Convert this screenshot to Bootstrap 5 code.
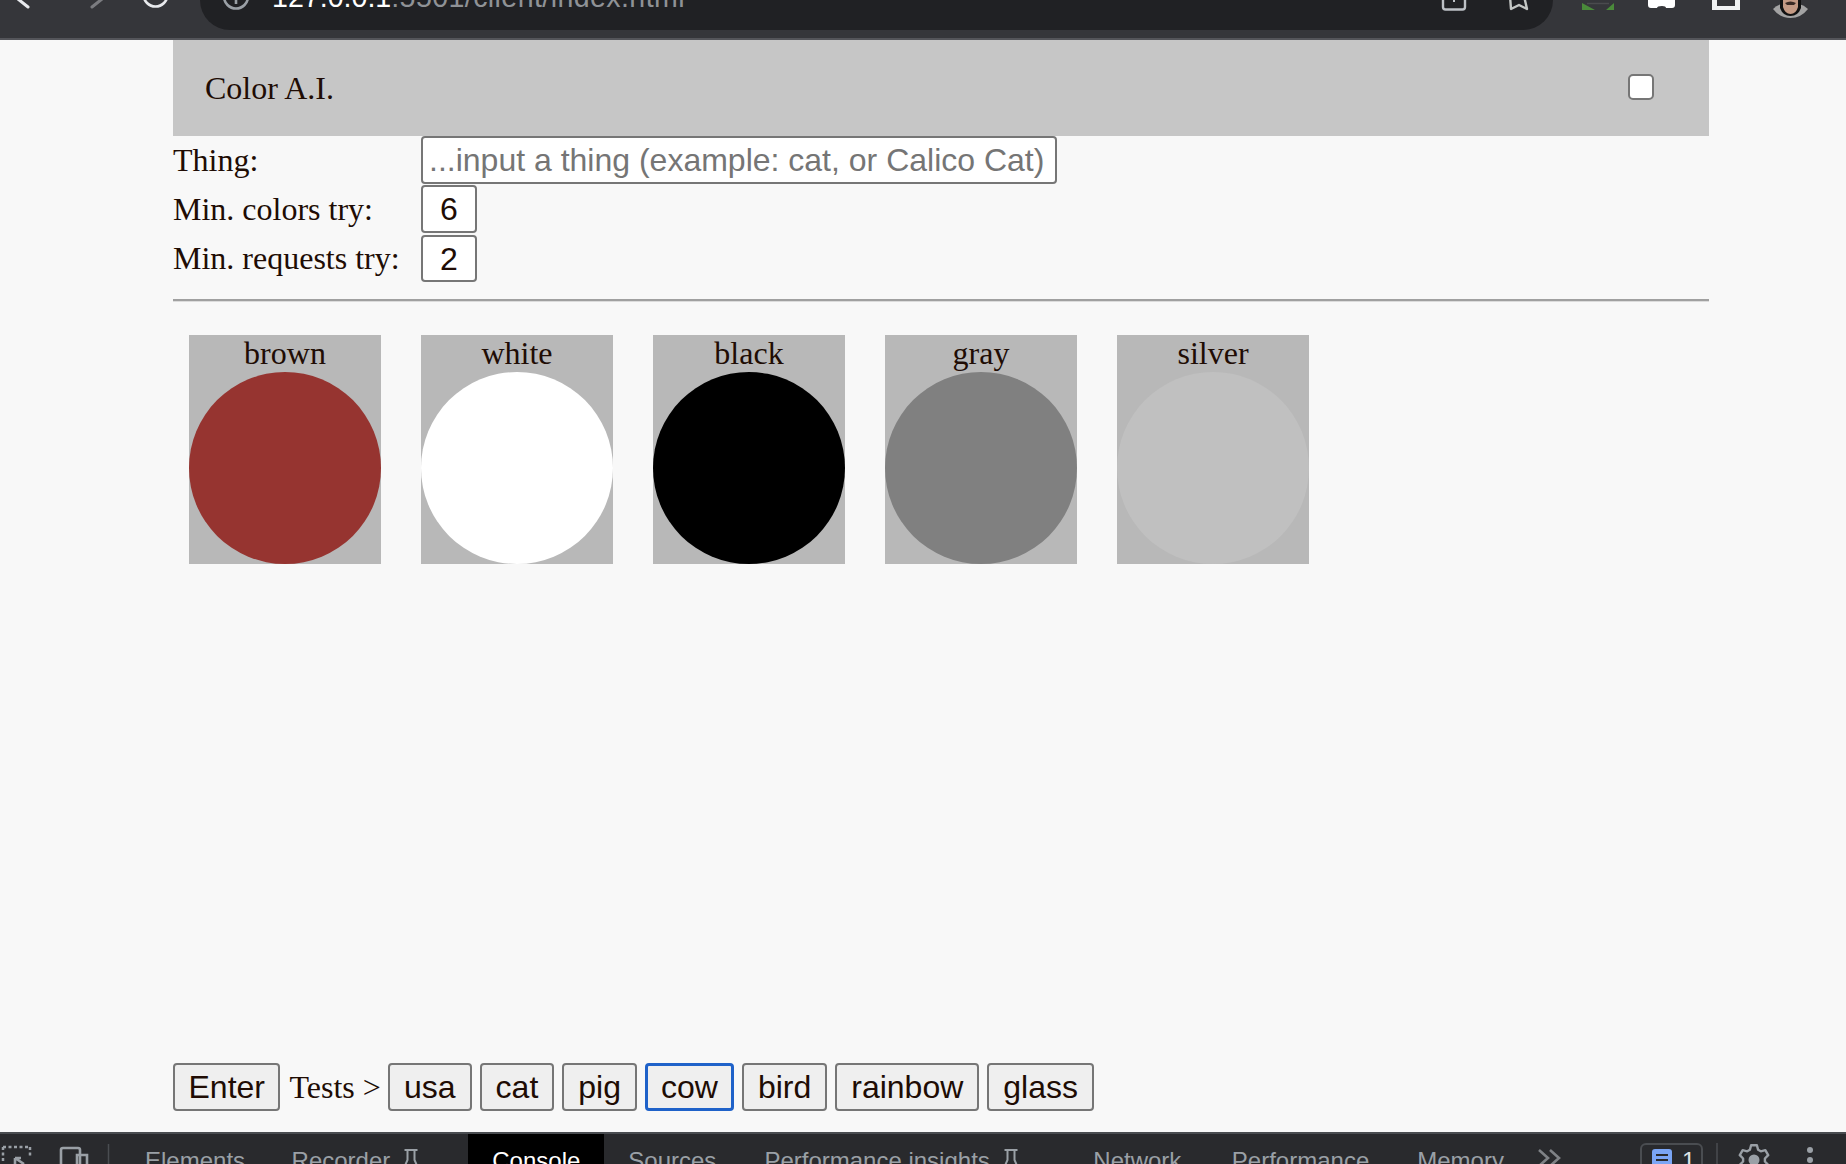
<!DOCTYPE html>
<html lang="en">
<head>
  <meta charset="UTF-8" />
  <title>Color A.I.</title>
  <link href="https://cdn.jsdelivr.net/npm/bootstrap@5.3.0/dist/css/bootstrap.min.css" rel="stylesheet" />
  <style>
    html, body { height: 100%; overflow: hidden; }
    body {
      background: #f8f8f8;
      color: #200c04;
      font-family: "Liberation Serif", serif;
      font-size: 32px;
      line-height: 37px;
    }
    svg { display: block; flex: none; }

    /* browser chrome, cut off at the top */
    .chrome-bar { height: 40px; flex: none; background: #35363a; border-bottom: 2px solid #54555a; }
    .omni {
      width: 1353px; height: 30px; flex: none;
      background: #202124; border-radius: 0 0 30px 30px;
      font: 28.6px/1 "Liberation Sans", sans-serif; color: #8f9296;
    }
    .omni-url { position: relative; flex: none; align-self: flex-end; margin: 0 0 18px 21px; white-space: nowrap; letter-spacing: .4px; }
    .omni-url b { font-weight: 400; color: #fff; letter-spacing: 0; }

    .app-wrap { padding: 0 137px 0 173px; }
    .app-head { height: 96px; background: #c6c6c6; padding: 0 55px 0 32px; }
    .app-check { width: 26px; height: 26px; border: 2px solid #767676; border-radius: 5px; background: #fff; appearance: none; display: block; margin-bottom: 2px; }

    .form-line { height: 49.4px; }
    .form-line label { width: 248px; flex: none; padding-top: 5.6px; }
    .txt-input {
      height: 47.6px; border: 2px solid #767676; border-radius: 4px; background: #fff;
      font: 32px "Liberation Sans", sans-serif; color: #200c04; padding: 1px 6px 0;
    }
    .txt-input::placeholder { color: #757575; opacity: 1; }
    .txt-thing { width: 636px; }
    .txt-num { width: 56px; text-align: center; }
    .rule { height: 3px; background: #a0a0a0; border-bottom: 1px solid #dcdcdc; margin: 15px 0 33px; }

    .swatches { padding-left: 16px; gap: 40px; }
    .swatch { width: 192px; height: 229px; background: #b8b8b8; text-align: center; }
    .swatch-dot { width: 192px; height: 192px; border-radius: 50%; }
    .dot-brown { background: #963430; }
    .dot-white { background: #fff; }
    .dot-black { background: #000; }
    .dot-gray { background: #808080; }
    .dot-silver { background: #c0c0c0; }

    .tests-row { gap: 8px; padding-bottom: 21px; }
    .tests-label { width: 91.5px; padding-left: 1px; flex: none; white-space: nowrap; }
    .test-btn {
      height: 48px; padding: 0 14px; background: #efefef;
      border: 2px solid #767676; border-radius: 4px;
      font: 32px "Liberation Sans", sans-serif; color: #200c04;
    }
    .test-btn:first-child { padding: 0 13.5px; }
    .test-btn.is-focus { border: 3px solid #1f62c9; padding: 0 13px; }

    /* devtools strip, cut off at the bottom */
    .dev-bar {
      height: 32px; flex: none; background: #292a2d; border-top: 2px solid #494c50; overflow: hidden;
      font: 24px/1 "Liberation Sans", sans-serif; color: #9aa0a6;
    }
    .dev-tab { flex: none; padding: 15px 24px 0; white-space: nowrap; }
    .dev-tab.on { background: #000; color: #fff; }
    .tab-elements { padding-right: 22.5px; }
    .tab-network { padding-right: 26.5px; }
    .dev-flask { display: inline-block; width: 54px; }
    .dev-flask.wide { width: 55.5px; }
    .dev-flask svg { display: inline-block; margin-left: 14px; overflow: visible; }
    .dev-more { margin-left: 2.5px; }
    .dev-count {
      width: 63px; height: 40px; margin-top: 9px; flex: none;
      border: 2px solid #4a4d51; border-radius: 6px; padding: 4px 0 0 10px; gap: 10px; color: #dfe1e5;
    }
  </style>
</head>
<body class="d-flex flex-column">

  <div class="chrome-bar d-flex align-items-start overflow-hidden">
    <svg width="200" height="38" fill="none" stroke-linecap="round">
      <path d="M18 -1 L28 7" stroke="#e8eaed" stroke-width="3" />
      <path d="M102 -1 L92 7" stroke="#7b7c80" stroke-width="3" />
      <circle cx="155.5" cy="-5.5" r="12" stroke="#e8eaed" stroke-width="2.6" />
    </svg>
    <div class="omni d-flex">
      <svg width="51" height="30" fill="none">
        <circle cx="36" cy="-3.5" r="12" stroke="#9aa0a6" stroke-width="2.6" />
        <path d="M36 0 V4" stroke="#9aa0a6" stroke-width="2.6" />
      </svg>
      <span class="omni-url"><b>127.0.0.1</b>:5501/client/index.html</span>
      <svg class="ms-auto" width="130" height="30" fill="none">
        <path d="M20 -2 V7 Q20 9.500 22.500 9.500 H39.500 Q42 9.500 42 7 V-2" stroke="#bdc1c6" stroke-width="2.4" />
        <path d="M31 -2 V2" stroke="#bdc1c6" stroke-width="2" />
        <path d="M87 -4 L88 9 L96 5 L104 9 L101 -4" stroke="#c4c7c5" stroke-width="2.4" stroke-linejoin="round" />
      </svg>
    </div>
    <svg width="293" height="38">
      <path d="M29 3 L42 10 H29 Z M61 3 V10 H53 Z" fill="#4a8a3a" />
      <path d="M34 3.500 H56" stroke="#4a4b4e" stroke-width="1.500" />
      <path d="M95 -2 H122 V5 Q122 8 119 8 H113 Q113 6 109 6 Q104 6 104 8 H98 Q95 8 95 5 Z" fill="#fff" />
      <path d="M159 -2 H187 V10 H159 Z" fill="#f1f3f4" />
      <path d="M164 -2 H182 V6 H164 Z" fill="#35363a" />
      <path d="M220 9 Q224 5 229 4 H246 Q251 5 255 9 Q248 18 237.500 18 Q227 18 220 9 Z" fill="#a3a3a3" />
      <path d="M227 -2 H248 V8 Q245 16 237.500 16 Q230 16 227 8 Z" fill="#111" />
      <path d="M230 -2 H245 V7 Q243 14 237.500 14 Q232 14 230 7 Z" fill="#c49a84" />
      <path d="M232 3 Q237.500 0 243 3 L241 5 H234 Z" fill="#3a2a24" />
    </svg>
  </div>

  <div class="app-wrap flex-grow-1 d-flex flex-column">
    <div class="app-head d-flex align-items-center justify-content-between">
      <span>Color A.I.</span>
      <input class="app-check" type="checkbox" />
    </div>

    <div class="form-line d-flex align-items-start">
      <label>Thing:</label>
      <input class="txt-input txt-thing" type="text" placeholder="...input a thing (example: cat, or Calico Cat)" />
    </div>
    <div class="form-line d-flex align-items-start">
      <label>Min. colors try:</label>
      <input class="txt-input txt-num" type="text" value="6" />
    </div>
    <div class="form-line d-flex align-items-start">
      <label>Min. requests try:</label>
      <input class="txt-input txt-num" type="text" value="2" />
    </div>
    <div class="rule"></div>

    <div class="swatches d-flex">
      <div class="swatch">brown<div class="swatch-dot dot-brown"></div></div>
      <div class="swatch">white<div class="swatch-dot dot-white"></div></div>
      <div class="swatch">black<div class="swatch-dot dot-black"></div></div>
      <div class="swatch">gray<div class="swatch-dot dot-gray"></div></div>
      <div class="swatch">silver<div class="swatch-dot dot-silver"></div></div>
    </div>

    <div class="tests-row d-flex align-items-center mt-auto">
      <button class="test-btn">Enter</button>
      <span class="tests-label">Tests &gt;</span>
      <button class="test-btn">usa</button>
      <button class="test-btn">cat</button>
      <button class="test-btn">pig</button>
      <button class="test-btn is-focus">cow</button>
      <button class="test-btn">bird</button>
      <button class="test-btn">rainbow</button>
      <button class="test-btn">glass</button>
    </div>
  </div>

  <div class="dev-bar d-flex">
    <svg width="121" height="30" fill="none" stroke="#9aa0a6">
      <path d="M3 13 H30 M3 13 V28 M30 13 V24" stroke-width="2.500" stroke-dasharray="3 2.500" />
      <path d="M15 24 L24 30 M15 24 V30 M15 24 H21" stroke-width="2.600" />
      <path d="M80 30 V16 Q80 14 78 14 H63 Q61 14 61 16 V30" stroke-width="2.600" />
      <path d="M77 30 V21 H87 V30" stroke-width="2.600" />
      <path d="M108.500 10 V30" stroke="#4a4d51" stroke-width="1.500" />
    </svg>
    <div class="dev-tab tab-elements">Elements</div>
    <div class="dev-tab">Recorder<span class="dev-flask"><svg width="14" height="16" fill="none" stroke="#9aa0a6" stroke-width="2"><path d="M0.500 -5 H13.500 M3.500 -5 V5 L-1 15 M10.500 -5 V5 L15 15" /></svg></span></div>
    <div class="dev-tab on">Console</div>
    <div class="dev-tab">Sources</div>
    <div class="dev-tab">Performance insights<span class="dev-flask wide"><svg width="14" height="16" fill="none" stroke="#9aa0a6" stroke-width="2"><path d="M0.500 -5 H13.500 M3.500 -5 V5 L-1 15 M10.500 -5 V5 L15 15" /></svg></span></div>
    <div class="dev-tab tab-network">Network</div>
    <div class="dev-tab">Performance</div>
    <div class="dev-tab">Memory</div>
    <svg class="dev-more" width="40" height="30" fill="none" stroke="#7f8286" stroke-width="2.600">
      <path d="M9 16 L18 24 L9 32 M20 16 L29 24 L20 32" />
    </svg>
    <div class="dev-count d-flex ms-auto">
      <svg width="20" height="20"><rect width="20" height="24" rx="3" fill="#7aa5f5" /><path d="M4 6 H16 M4 11 H16 M4 16 H11" stroke="#292a2d" stroke-width="2" /></svg>
      <span>1</span>
    </div>
    <svg width="143" height="30">
      <path d="M14 9 V30" stroke="#4a4d51" stroke-width="1.500" />
      <g transform="translate(51 26)">
        <path d="M-2.900 -14.700 L2.900 -14.700 L4.100 -10.200 L6.800 -8.700 L11.300 -9.800 L14.200 -4.900 L10.900 -1.500 L10.900 1.500 L14.200 4.900 L11.300 9.800 L6.800 8.700 L4.100 10.200 L2.900 14.700 L-2.900 14.700 L-4.100 10.200 L-6.800 8.700 L-11.300 9.800 L-14.200 4.900 L-10.900 1.500 L-10.900 -1.500 L-14.200 -4.900 L-11.300 -9.800 L-6.800 -8.700 L-4.100 -10.200 Z" fill="none" stroke="#9aa0a6" stroke-width="2.400" stroke-linejoin="round" />
        <circle r="5.500" fill="#9aa0a6" />
      </g>
      <circle cx="107" cy="16" r="3" fill="#9aa0a6" />
      <circle cx="107" cy="26" r="3" fill="#9aa0a6" />
    </svg>
  </div>

</body>
</html>
